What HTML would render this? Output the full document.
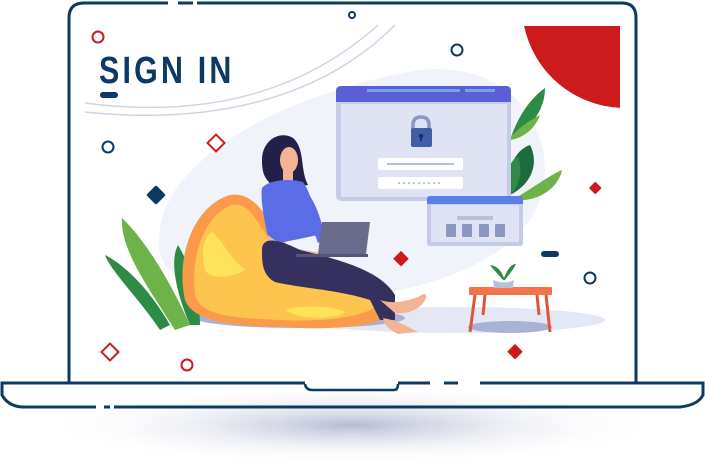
<!DOCTYPE html>
<html><head><meta charset="utf-8"><style>
html,body{margin:0;padding:0;background:#fff;width:705px;height:470px;overflow:hidden}
svg{display:block}
</style></head><body>
<svg width="705" height="470" viewBox="0 0 705 470" xmlns="http://www.w3.org/2000/svg">
<defs>
<radialGradient id="sh" cx="50%" cy="50%" r="50%">
<stop offset="0" stop-color="#aeb4cf" stop-opacity="0.9"/>
<stop offset="1" stop-color="#ffffff" stop-opacity="0"/>
</radialGradient>
<clipPath id="rc"><rect x="523" y="26" width="97" height="82"/></clipPath>
</defs>
<ellipse cx="352" cy="425" rx="310" ry="40" fill="url(#sh)"/>
<path d="M160 230 C170 150 300 90 420 70 C520 60 560 140 540 200 C520 260 420 300 300 300 C200 300 150 280 160 230Z" fill="#f0f3fa"/>
<ellipse cx="455" cy="320" rx="150" ry="13" fill="#e3e8f4"/>
<ellipse cx="300" cy="318" rx="105" ry="10" fill="#aab2d4"/>
<ellipse cx="510" cy="327" rx="42" ry="6" fill="#aab2d4"/>
<circle cx="625" cy="5" r="103" fill="#cc1a1d" clip-path="url(#rc)"/>
<path d="M85 103 C200 118 300 95 378 25" fill="none" stroke="#cdd5e2" stroke-width="1.5"/>
<path d="M85 112 C210 125 320 100 395 25" fill="none" stroke="#cdd5e2" stroke-width="1.5"/>
<path d="M69 383 V18 Q69 3 84 3 H168 M178 3 H193 M197 3 H622 Q636 3 636 18 V383" fill="none" stroke="#0d3a64" stroke-width="3"/>
<path d="M305 383 H2 V395 Q8 406 22 407 H96 M104 407 H110 M114 407 H680 Q698 405 703 395 V383 H480 M458 383 H444 M430 383 H398" fill="none" stroke="#0d3a64" stroke-width="3"/>
<path d="M305 384 Q306 390 312 390 H394 Q398 390 398 384" fill="none" stroke="#0d3a64" stroke-width="2.5"/>
<text x="99" y="83" font-family="Liberation Sans Narrow, Liberation Sans, sans-serif" font-weight="bold" font-size="38" letter-spacing="4" fill="#0d3a64" transform="translate(99 0) scale(0.8 1) translate(-99 0)">SIGN IN</text>
<rect x="100" y="92" width="18" height="6" rx="3" fill="#0d3a64"/>
<circle cx="98" cy="37" r="5.5" fill="none" stroke="#cc1a1d" stroke-width="2"/>
<circle cx="108" cy="147" r="5.5" fill="none" stroke="#0d3a64" stroke-width="2"/>
<circle cx="352" cy="15" r="3" fill="none" stroke="#0d3a64" stroke-width="2"/>
<circle cx="457" cy="50" r="5.5" fill="none" stroke="#0d3a64" stroke-width="2"/>
<circle cx="590" cy="278" r="5.5" fill="none" stroke="#0d3a64" stroke-width="2"/>
<circle cx="187" cy="365" r="5.5" fill="none" stroke="#cc1a1d" stroke-width="2"/>
<rect x="210" y="137" width="12" height="12" fill="none" stroke="#cc1a1d" stroke-width="2" transform="rotate(45 216 143)"/>
<rect x="104" y="346" width="12" height="12" fill="none" stroke="#cc1a1d" stroke-width="2" transform="rotate(45 110 352)"/>
<rect x="149" y="188" width="14" height="14" rx="2" fill="#0d3a64" transform="rotate(45 156 195)"/>
<rect x="396" y="253" width="11" height="11" fill="#cc1a1d" transform="rotate(45 401 258)"/>
<rect x="591" y="184" width="9" height="9" fill="#cc1a1d" transform="rotate(45 596 188)"/>
<rect x="510" y="346" width="11" height="11" fill="#cc1a1d" transform="rotate(45 515 351)"/>
<rect x="541" y="251" width="18" height="6" rx="3" fill="#0d3a64"/>
<path d="M510 140 C520 110 535 95 545 88 C545 110 530 130 510 140Z" fill="#2e8b45"/>
<path d="M508 140 C520 125 535 118 540 115 C535 130 520 140 508 140Z" fill="#6db34a"/>
<path d="M510 195 C505 170 515 150 530 145 C540 165 530 185 510 195Z" fill="#1e6b42"/>
<path d="M510 195 C505 180 508 160 518 157 C524 172 518 188 510 195Z" fill="#2e8b45"/>
<path d="M512 200 C530 190 550 175 562 170 C558 190 535 203 512 200Z" fill="#6db34a"/>
<rect x="336" y="86" width="175" height="115" rx="5" fill="#c5cbe4"/>
<rect x="341" y="104" width="166" height="93" fill="#dfe3f3"/>
<path d="M336 102 V91 Q336 86 341 86 H506 Q511 86 511 91 V102Z" fill="#5b5fd6"/>
<rect x="367" y="89" width="93" height="3" fill="#7ca0ee"/>
<rect x="465" y="89" width="30" height="3" fill="#7ca0ee"/>
<path d="M413 133 V125 Q413 117 421 117 Q429 117 429 125 V130" fill="none" stroke="#8a97bf" stroke-width="3.5"/>
<rect x="411" y="128" width="21" height="19" rx="2" fill="#3f5fa8"/>
<circle cx="421" cy="136" r="2.3" fill="#1d2f5c"/><rect x="420" y="136" width="2" height="5" fill="#1d2f5c"/>
<rect x="378" y="158" width="85" height="12" rx="2" fill="#fff"/>
<rect x="387" y="163" width="67" height="2" fill="#b9bfd6"/>
<rect x="378" y="177" width="85" height="12" rx="2" fill="#fff"/>
<g fill="#b9bfd6"><circle cx="399" cy="183" r="1.1"/><circle cx="404" cy="183" r="1.1"/><circle cx="409" cy="183" r="1.1"/><circle cx="414" cy="183" r="1.1"/><circle cx="419" cy="183" r="1.1"/><circle cx="424" cy="183" r="1.1"/><circle cx="429" cy="183" r="1.1"/><circle cx="434" cy="183" r="1.1"/><circle cx="439" cy="183" r="1.1"/></g>
<rect x="427" y="196" width="96" height="50" rx="3" fill="#c5cbe4"/>
<rect x="431" y="205" width="88" height="37" fill="#dfe3f3"/>
<path d="M427 204 V199 Q427 196 430 196 H520 Q523 196 523 199 V204Z" fill="#5b7fe6"/>
<rect x="457" y="216" width="36" height="4" fill="#b9bfd6"/>
<g fill="#8a97bf"><rect x="446" y="224" width="10" height="13" rx="1"/><rect x="462" y="224" width="10" height="13" rx="1"/><rect x="479" y="224" width="10" height="13" rx="1"/><rect x="495" y="224" width="10" height="13" rx="1"/></g>
<path d="M160 330 C140 300 110 270 105 255 C125 265 150 290 170 325Z" fill="#2e8b45"/>
<path d="M175 330 C150 290 120 250 122 218 C140 235 165 270 190 325Z" fill="#6db34a"/>
<path d="M190 325 C175 290 170 260 178 245 C190 265 200 295 200 325Z" fill="#2e8b45"/>
<path d="M185 300 C175 255 195 205 230 195 C260 190 270 230 300 260 C340 285 380 290 398 305 C400 320 360 330 300 328 C240 326 195 325 185 300Z" fill="#fa9a4a"/>
<path d="M195 295 C190 255 205 215 232 205 C255 200 262 240 290 265 C320 285 360 290 380 302 C370 318 320 322 280 320 C230 318 200 315 195 295Z" fill="#fec54e"/>
<path d="M205 270 C200 250 205 235 212 232 C222 240 230 258 245 270 C230 278 210 280 205 270Z" fill="#fee35a"/>
<path d="M285 310 C300 305 330 305 345 312 C335 320 300 320 285 310Z" fill="#fee35a"/>
<path d="M262 160 C262 140 280 130 293 138 C305 148 300 170 308 185 L278 190 C265 180 262 175 262 160Z" fill="#23204a"/>
<ellipse cx="289" cy="160" rx="9" ry="13" fill="#f4b493"/>
<rect x="283" y="170" width="10" height="12" fill="#f4b493"/>
<path d="M262 188 C268 180 290 178 303 182 C312 195 316 215 318 235 L270 245 C265 225 260 200 262 188Z" fill="#5b6de6"/>
<path d="M268 235 C285 250 310 250 330 255 L330 262 C300 262 280 255 265 248Z" fill="#f4b493"/>
<path d="M305 190 C315 200 322 220 325 240 L318 243 C312 225 305 210 300 200Z" fill="#5b6de6"/>
<path d="M262 250 C262 235 280 240 300 250 C340 260 380 270 395 295 L395 320 L380 320 L370 300 C340 290 300 288 275 282 C262 275 262 262 262 250Z" fill="#35305e"/>
<path d="M380 300 C395 305 410 300 420 296 C425 292 428 295 425 300 C420 310 405 315 395 313Z" fill="#f4b493"/>
<path d="M383 318 C395 320 405 325 418 332 L398 334 C390 330 385 326 383 318Z" fill="#f4b493"/>
<path d="M322 222 H370 L366 254 H318Z" fill="#6a6a8a"/>
<rect x="296" y="254" width="72" height="3" fill="#55557a"/>
<rect x="469" y="287" width="83" height="8" rx="1" fill="#f4744a"/>
<path d="M475 295 L470 332 M546 295 L550 332 M485 295 L483 315 M537 295 L539 315" stroke="#e0553a" stroke-width="3"/>
<path d="M493 280 Q505 285 514 280 L513 288 H494Z" fill="#b9bfd6"/>
<path d="M503 280 C496 272 492 268 490 265 C498 266 502 272 504 278 C507 270 511 264 516 264 C513 270 508 276 505 280Z" fill="#2e8b45"/>
</svg>
</body></html>
